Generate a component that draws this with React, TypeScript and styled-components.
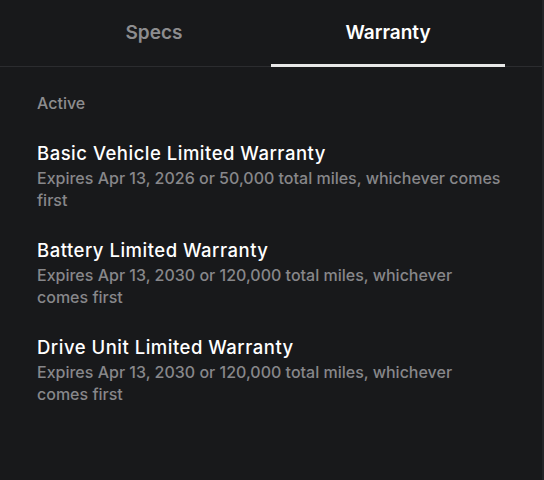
import React, { useState } from 'react';
import styled, { createGlobalStyle } from 'styled-components';

const GlobalStyle = createGlobalStyle`
  html, body {
    margin: 0;
    padding: 0;
    background: #18191b;
  }
  body {
    font-family: Inter, "Noto Sans", sans-serif;
    -webkit-font-smoothing: antialiased;
  }
`;

const Screen = styled.div`
  width: 544px;
  height: 480px;
  background: #18191b;
  color: #ffffff;
  box-sizing: border-box;
  border-right: 2px solid #232427;
  overflow: hidden;
`;

const TabBar = styled.div`
  display: flex;
  padding: 0 37px 0 37px;
  border-bottom: 1px solid #2b2c2f;
`;

const Tab = styled.button<{ active: boolean }>`
  flex: 1;
  height: 67px;
  background: none;
  border: none;
  border-bottom: 3px solid ${(p) => (p.active ? '#e8e8e8' : 'transparent')};
  margin-bottom: -1px;
  padding: 0;
  font-family: inherit;
  font-size: 19px;
  font-weight: 600;
  color: ${(p) => (p.active ? '#ffffff' : '#8d8d8f')};
  cursor: pointer;
`;

const Content = styled.div`
  padding: 26px 38px 0 37px;
`;

const SectionLabel = styled.div`
  font-size: 16px;
  font-weight: 500;
  line-height: 20px;
  color: #8d8d8f;
  margin-bottom: 27px;
`;

const List = styled.div`
  display: flex;
  flex-direction: column;
  gap: 26px;
`;

const Item = styled.div`
  display: flex;
  flex-direction: column;
`;

const Title = styled.div`
  font-size: 18.5px;
  font-weight: 500;
  line-height: 26px;
  letter-spacing: 0.5px;
  color: #ffffff;
  margin-bottom: 1px;
`;

const Detail = styled.div`
  font-size: 16px;
  font-weight: 500;
  line-height: 22px;
  color: #87878a;
`;

const warranties = [
  {
    title: 'Basic Vehicle Limited Warranty',
    detail: 'Expires Apr 13, 2026 or 50,000 total miles, whichever comes first',
  },
  {
    title: 'Battery Limited Warranty',
    detail: 'Expires Apr 13, 2030 or 120,000 total miles, whichever comes first',
  },
  {
    title: 'Drive Unit Limited Warranty',
    detail: 'Expires Apr 13, 2030 or 120,000 total miles, whichever comes first',
  },
];

const App: React.FC = () => {
  const [tab, setTab] = useState('Warranty');

  return (
    <>
      <GlobalStyle />
      <Screen>
        <TabBar>
          {['Specs', 'Warranty'].map((name) => (
            <Tab key={name} active={tab === name} onClick={() => setTab(name)}>
              {name}
            </Tab>
          ))}
        </TabBar>
        <Content>
          <SectionLabel>Active</SectionLabel>
          <List>
            {warranties.map((w) => (
              <Item key={w.title}>
                <Title>{w.title}</Title>
                <Detail>{w.detail}</Detail>
              </Item>
            ))}
          </List>
        </Content>
      </Screen>
    </>
  );
};

export default App;
